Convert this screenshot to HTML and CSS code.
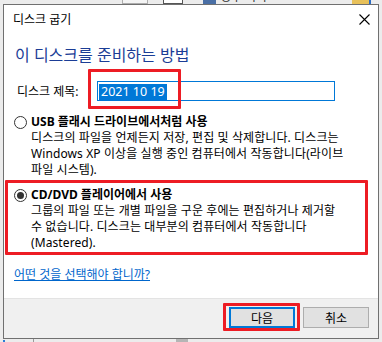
FILE: index.html
```html
<!DOCTYPE html>
<html lang="ko">
<head>
    <meta charset="UTF-8">
    <meta name="viewport" content="width=device-width, initial-scale=1.0">
    <title>디스크 굽기</title>
    <link rel="stylesheet" href="styles.css">
</head>
<body>
    <div class="backdrop">
        <span class="bit bit-box"></span>
        <span class="bit bit-box dark"></span>
        <span class="bit bit-icon"></span>
        <span class="bit-text">경우 복사</span>
        <span class="bit bit-folder"></span>
    </div>

    <div class="dialog">
        <div class="titlebar">
            <span class="title">디스크 굽기</span>
            <svg class="close" width="11" height="11" viewBox="0 0 11 11">
                <path d="M0.5 0.5 L10.5 10.5 M10.5 0.5 L0.5 10.5" stroke="#000" stroke-width="1.1" fill="none"/>
            </svg>
        </div>

        <div class="content">
            <h1 class="heading">이 디스크를 준비하는 방법</h1>

            <div class="title-row">
                <label class="title-label">디스크 제목:</label>
                <div class="textbox"><span class="selected">2021 10 19</span></div>
            </div>

            <div class="option">
                <span class="radio"></span>
                <div class="option-text">
                    <div class="option-title">USB 플래시 드라이브에서처럼 사용</div>
                    <div class="option-desc">디스크의 파일을 언제든지 저장, 편집 및 삭제합니다. 디스크는<br>Windows XP 이상을 실행 중인 컴퓨터에서 작동합니다(라이브<br>파일 시스템).</div>
                </div>
            </div>

            <div class="option option-second">
                <span class="radio checked"></span>
                <div class="option-text">
                    <div class="option-title">CD/DVD 플레이어에서 사용</div>
                    <div class="option-desc">그룹의 파일 또는 개별 파일을 구운 후에는 편집하거나 제거할<br>수 없습니다. 디스크는 대부분의 컴퓨터에서 작동합니다<br>(Mastered).</div>
                </div>
            </div>

            <a class="help" href="#">어떤 것을 선택해야 합니까?</a>
        </div>

        <div class="buttons">
            <button class="btn btn-default">다음</button>
            <button class="btn">취소</button>
        </div>
    </div>

    <div class="bottom-strip">
        <span class="dot"></span>
        <span class="line"></span>
        <span class="block"></span>
    </div>

    <div class="mark mark-input"></div>
    <div class="mark mark-option"></div>
    <div class="mark mark-button"></div>
</body>
</html>
```

FILE: styles.css
```css
body {
    margin: 0;
    width: 382px;
    height: 342px;
    overflow: hidden;
    position: relative;
    background-color: #ececec;
    font-family: "Noto Sans", "Noto Sans CJK KR", sans-serif;
    font-size: 12px;
    color: #000;
}

/* window behind the dialog */
.backdrop {
    position: absolute;
    left: 0;
    top: 0;
    width: 382px;
    height: 4px;
    overflow: hidden;
}
.bit {
    position: absolute;
    bottom: 0;
    height: 6px;
}
.bit-box {
    left: 122px;
    width: 24px;
    border: 1px solid #adadad;
    background-color: #f4f4f4;
}
.bit-box.dark {
    left: 163px;
    width: 18px;
    border-color: #555;
    background-color: #fff;
}
.bit-icon {
    left: 203px;
    width: 13px;
    background-color: #4a6fa5;
}
.bit-text {
    position: absolute;
    left: 220px;
    top: -10px;
    font-size: 12px;
    line-height: 14px;
    color: #333;
}
.bit-folder {
    left: 352px;
    width: 17px;
    background-color: #e8c15a;
    border-right: 2px solid #2b6cc4;
}

.dialog {
    margin: 4px 0 0 3px;
    width: 374px;
    height: 333px;
    border: 1px solid #707070;
    background-color: #fff;
    display: flex;
    flex-direction: column;
}

.titlebar {
    height: 28px;
    display: flex;
    align-items: center;
    justify-content: space-between;
    padding: 0 8px 0 9px;
}
.title {
    line-height: 15px;
}
.close {
    display: block;
}

.content {
    flex: 1;
    padding: 12px 11px 0 11px;
}
.heading {
    margin: 0;
    font-size: 16px;
    line-height: 20px;
    font-weight: normal;
    color: #1b3d96;
}

.title-row {
    margin-top: 16px;
    height: 20px;
    display: flex;
    align-items: center;
}
.title-label {
    width: 80px;
    margin-left: 2px;
}
.textbox {
    width: 238px;
    height: 20px;
    box-sizing: border-box;
    border: 1px solid #0078d7;
    padding: 1px;
}
.selected {
    display: inline-block;
    height: 16px;
    line-height: 16px;
    padding: 0 2px;
    background-color: #0078d7;
    color: #fff;
    font-size: 12.5px;
}

.option {
    display: flex;
    margin-top: 13px;
    margin-left: -1px;
}
.option-second {
    margin-top: 9px;
}
.radio {
    flex: none;
    width: 13px;
    height: 13px;
    box-sizing: border-box;
    margin: 2px 4px 0 0;
    border: 1px solid #333;
    border-radius: 50%;
    display: flex;
    align-items: center;
    justify-content: center;
}
.radio.checked::after {
    content: "";
    width: 7px;
    height: 7px;
    border-radius: 50%;
    background-color: #333;
}
.option-title {
    font-weight: bold;
    line-height: 16px;
}
.option-desc {
    line-height: 16px;
    letter-spacing: 0.1px;
}

.help {
    display: inline-block;
    margin-top: 16px;
    margin-left: -1px;
    line-height: 16px;
    color: #0066cc;
}

.buttons {
    height: 40px;
    box-sizing: border-box;
    border-top: 1px solid #e3e3e3;
    background-color: #f0f0f0;
    display: flex;
    justify-content: flex-end;
    align-items: flex-start;
    gap: 8px;
    padding: 8px 9px 0 0;
}
.btn {
    width: 66px;
    height: 21px;
    box-sizing: border-box;
    border: 1px solid #adadad;
    background-color: #e1e1e1;
    font-family: "Noto Sans", "Noto Sans CJK KR", sans-serif;
    font-size: 12px;
    padding: 0;
    color: #000;
}
.btn-default {
    border: 2px solid #0078d7;
}

.bottom-strip {
    position: absolute;
    left: 0;
    top: 339px;
    width: 382px;
    height: 3px;
}
.bottom-strip .dot {
    position: absolute;
    left: 3px;
    top: 1px;
    width: 2px;
    height: 2px;
    background-color: #2b7bd6;
}
.bottom-strip .line {
    position: absolute;
    left: 33px;
    width: 1px;
    height: 3px;
    background-color: #9a9a9a;
}
.bottom-strip .block {
    position: absolute;
    left: 176px;
    width: 12px;
    height: 3px;
    background-color: #b5b5b5;
}

/* red annotation boxes */
.mark {
    position: absolute;
    box-sizing: border-box;
    border: 3px solid #ed1c24;
    border-radius: 1px;
}
.mark-input {
    left: 88px;
    top: 69px;
    width: 93px;
    height: 40px;
}
.mark-option {
    left: 5px;
    top: 180px;
    width: 363px;
    height: 75px;
}
.mark-button {
    left: 223px;
    top: 303px;
    width: 77px;
    height: 28px;
}
```
